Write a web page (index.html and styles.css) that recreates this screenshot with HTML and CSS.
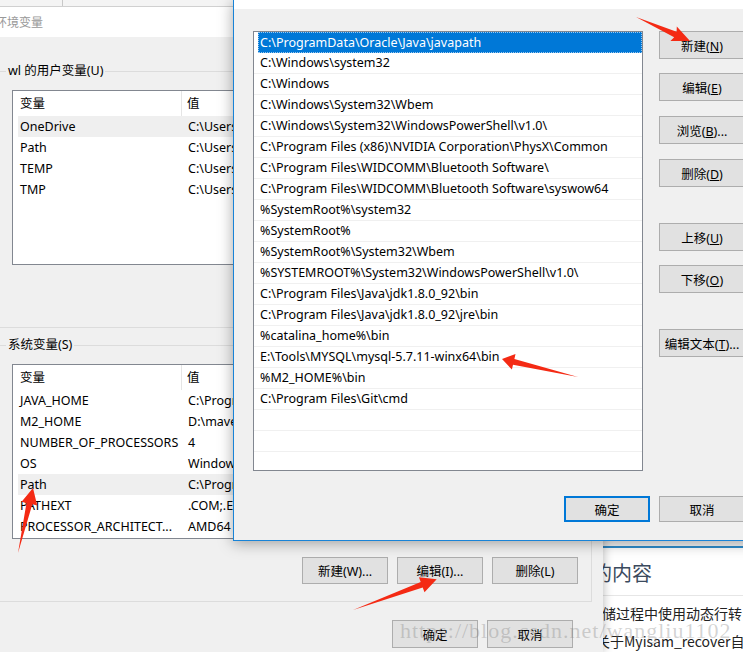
FILE: index.html
```html
<!DOCTYPE html>
<html lang="zh-CN">
<head>
<meta charset="utf-8">
<title>编辑环境变量</title>
<link rel="stylesheet" href="styles.css">
</head>
<body>
<div class="desktop">
  <div class="web">
    <div class="web-top"></div>
    <div class="web-h">的内容</div>
    <div class="web-p">存储过程中使用动态行转</div>
    <div class="web-p web-p2">关于Myisam_recover自</div>
  </div>

  <div class="envwin">
    <div class="topstrip"><div class="tab"></div></div>
    <div class="titlebar">环境变量</div>
    <div class="group g1">
      <div class="glabel">wl 的用户变量(U)</div>
      <div class="lv">
        <div class="lv-head"><span class="c1 hc1">变量</span><span class="c2 hc2">值</span></div>
        <div class="lv-row hl"><span class="c1">OneDrive</span><span class="c2">C:\Users\wl\OneDrive</span></div>
        <div class="lv-row"><span class="c1">Path</span><span class="c2">C:\Users\wl\AppData\Local\Microsoft\WindowsApps</span></div>
        <div class="lv-row"><span class="c1">TEMP</span><span class="c2">C:\Users\wl\AppData\Local\Temp</span></div>
        <div class="lv-row"><span class="c1">TMP</span><span class="c2">C:\Users\wl\AppData\Local\Temp</span></div>
      </div>
    </div>
    <div class="group g2">
      <div class="glabel">系统变量(S)</div>
      <div class="lv">
        <div class="lv-head"><span class="c1 hc1">变量</span><span class="c2 hc2">值</span></div>
        <div class="lv-row"><span class="c1">JAVA_HOME</span><span class="c2">C:\Program Files\Java\jdk1.8.0_92</span></div>
        <div class="lv-row"><span class="c1">M2_HOME</span><span class="c2">D:\maven\apache-maven-3.3.9</span></div>
        <div class="lv-row"><span class="c1">NUMBER_OF_PROCESSORS</span><span class="c2">4</span></div>
        <div class="lv-row"><span class="c1">OS</span><span class="c2">Windows_NT</span></div>
        <div class="lv-row hl"><span class="c1">Path</span><span class="c2">C:\ProgramData\Oracle\Java\javapath</span></div>
        <div class="lv-row"><span class="c1">PATHEXT</span><span class="c2">.COM;.EXE;.BAT;.CMD;.VBS</span></div>
        <div class="lv-row"><span class="c1">PROCESSOR_ARCHITECT...</span><span class="c2">AMD64</span></div>
      </div>
      <div class="gbtns">
        <button class="btn">新建(W)...</button>
        <button class="btn">编辑(I)...</button>
        <button class="btn">删除(L)</button>
      </div>
    </div>
    <div class="envfoot">
      <button class="btn fbtn">确定</button>
      <button class="btn fbtn">取消</button>
    </div>
  </div>

  <div class="dlg">
    <div class="dlg-title"></div>
    <div class="dlg-body">
      <div class="dlg-main">
        <div class="plist">
          <div class="pitem sel">C:\ProgramData\Oracle\Java\javapath</div>
          <div class="pitem">C:\Windows\system32</div>
          <div class="pitem">C:\Windows</div>
          <div class="pitem">C:\Windows\System32\Wbem</div>
          <div class="pitem">C:\Windows\System32\WindowsPowerShell\v1.0\</div>
          <div class="pitem">C:\Program Files (x86)\NVIDIA Corporation\PhysX\Common</div>
          <div class="pitem">C:\Program Files\WIDCOMM\Bluetooth Software\</div>
          <div class="pitem">C:\Program Files\WIDCOMM\Bluetooth Software\syswow64</div>
          <div class="pitem">%SystemRoot%\system32</div>
          <div class="pitem">%SystemRoot%</div>
          <div class="pitem">%SystemRoot%\System32\Wbem</div>
          <div class="pitem">%SYSTEMROOT%\System32\WindowsPowerShell\v1.0\</div>
          <div class="pitem">C:\Program Files\Java\jdk1.8.0_92\bin</div>
          <div class="pitem">C:\Program Files\Java\jdk1.8.0_92\jre\bin</div>
          <div class="pitem">%catalina_home%\bin</div>
          <div class="pitem">E:\Tools\MYSQL\mysql-5.7.11-winx64\bin</div>
          <div class="pitem">%M2_HOME%\bin</div>
          <div class="pitem">C:\Program Files\Git\cmd</div>
          <div class="pitem"></div>
          <div class="pitem"></div>
          <div class="pitem"></div>
          <div class="pitem"></div>
        </div>
        <div class="pbtns">
          <button class="btn pbtn">新建(<u>N</u>)</button>
          <button class="btn pbtn gap14">编辑(<u>E</u>)</button>
          <button class="btn pbtn">浏览(<u>B</u>)...</button>
          <button class="btn pbtn gap15">删除(<u>D</u>)</button>
          <button class="btn pbtn gap36">上移(<u>U</u>)</button>
          <button class="btn pbtn gap14">下移(<u>O</u>)</button>
          <button class="btn pbtn gap36">编辑文本(<u>T</u>)...</button>
        </div>
      </div>
      <div class="dlg-foot">
        <button class="btn dbtn ok">确定</button>
        <button class="btn dbtn">取消</button>
      </div>
    </div>
  </div>

  <div class="watermark">https://blog.csdn.net/wangliu1102</div>

  <svg class="arrows" width="743" height="652" viewBox="0 0 743 652">
    <polygon points="636,17 676.6,31.8 676.8,26.4 690,41 670.4,41 674.2,37.2"/>
    <polygon points="578,377 514.4,358.9 515.5,354 502,359 511.9,369.6 513,364.7"/>
    <polygon points="18,553 32.3,504.3 37.2,505.4 33,488 21.6,501.8 26.5,502.9"/>
    <polygon points="353,610 422.7,587.6 424.5,592.3 436.7,579.3 418.9,577.3 420.7,582"/>
  </svg>
</div>
</body>
</html>
```

FILE: styles.css
```css
* { box-sizing: border-box; }

html, body {
  margin: 0;
  padding: 0;
}

body {
  width: 743px;
  height: 652px;
  overflow: hidden;
  background: #f0f0f0;
  font-family: "Noto Sans", "Noto Sans CJK SC", sans-serif;
  font-size: 12.5px;
  color: #000;
}

.desktop {
  position: relative;
  width: 743px;
  height: 652px;
  overflow: hidden;
}

/* ---------- web page behind ---------- */
.web {
  position: absolute;
  left: 560px;
  top: 541px;
  width: 200px;
  height: 111px;
  background: #fff;
  z-index: 1;
  font-family: "Noto Sans CJK SC", sans-serif;
}
.web-top {
  height: 7px;
  background: #f4f4f4;
  border-bottom: 2px solid #2f8dcc;
}
.web-h {
  margin-top: 11px;
  padding: 0 0 8px 32px;
  font-size: 20px;
  line-height: 28px;
  color: #3b4a5e;
  border-bottom: 1px solid #e6e6e6;
  white-space: nowrap;
}
.web-p {
  margin-top: 3px;
  padding-left: 28px;
  font-size: 14px;
  line-height: 28px;
  color: #222;
  white-space: nowrap;
}
.web-p2 {
  margin-top: 0;
  padding-left: 36px;
}

/* ---------- environment variables window ---------- */
.envwin {
  position: absolute;
  left: 0;
  top: 0;
  width: 603px;
  height: 652px;
  background: #f0f0f0;
  box-shadow: 0 0 10px rgba(0, 0, 0, 0.3);
  z-index: 2;
}
.topstrip {
  height: 7px;
  background: #f4f4f4;
  border-bottom: 1px solid #d0d0d0;
}
.tab {
  width: 63px;
  height: 6px;
  border-right: 1px solid #c8c8c8;
}
.titlebar {
  height: 30px;
  background: #fff;
  color: #999;
  font-family: "Noto Sans CJK SC", sans-serif;
  font-size: 12px;
  line-height: 30px;
  text-indent: -5px;
  white-space: nowrap;
}

.group {
  border: 1px solid #dcdcdc;
  margin-left: -10px;
  margin-right: 11px;
}
.g1 { margin-top: 34px; }
.g2 { margin-top: 17px; }

.glabel {
  width: max-content;
  margin: -9px 0 0 15px;
  padding: 0 2px;
  background: #f0f0f0;
  line-height: 16px;
}

.lv {
  width: 400px;
  height: 175px;
  margin: 11px 0 0 21px;
  padding-left: 5px;
  background: #fff;
  border: 1px solid #828790;
  overflow: hidden;
}
.g1 .lv { margin-bottom: 62px; }

.lv-head {
  display: flex;
  height: 25px;
  line-height: 25px;
}
.lv-row {
  display: flex;
  height: 21px;
  line-height: 21px;
  white-space: nowrap;
}
.lv-row.hl { background: #efefef; }

.c1 {
  flex: none;
  width: 168px;
  padding-left: 2px;
  white-space: nowrap;
  overflow: hidden;
}
.c2 {
  flex: none;
  padding-left: 2px;
  white-space: nowrap;
}
.hc1 {
  width: 164px;
  border-right: 1px solid #e5e5e5;
}
.hc2 { padding-left: 5px; }

.gbtns {
  display: flex;
  justify-content: flex-end;
  gap: 9px;
  margin: 18px 0 17px;
  padding-right: 13px;
}

.btn {
  width: 86px;
  height: 27px;
  padding: 0;
  background: #e1e1e1;
  border: 1px solid #adadad;
  font-family: "Noto Sans", "Noto Sans CJK SC", sans-serif;
  font-size: 12.5px;
  color: #000;
  white-space: nowrap;
}
.btn u { text-underline-offset: 1px; }

.envfoot {
  display: flex;
  justify-content: flex-end;
  gap: 9px;
  margin-top: 18px;
  padding-right: 30px;
}
.fbtn { height: 28px; }

/* ---------- edit dialog ---------- */
.dlg {
  position: absolute;
  left: 233px;
  top: 0;
  width: 530px;
  background: #f0f0f0;
  border-left: 1px solid #1883d7;
  border-bottom: 1px solid #1883d7;
  box-shadow: 0 2px 14px rgba(0, 0, 0, 0.35);
  z-index: 3;
}
.dlg-title {
  height: 9px;
  background: #fff;
}
.dlg-body {
  width: 511px;
  padding: 22px 0 18px 19px;
}
.dlg-main {
  display: flex;
  gap: 16px;
}
.plist {
  flex: none;
  width: 390px;
  height: 440px;
  background: #fff;
  border: 1px solid #828790;
  overflow: hidden;
}
.pitem {
  height: 21px;
  line-height: 20px;
  padding-left: 6px;
  border-bottom: 1px solid #f0f0f0;
  white-space: nowrap;
}
.pitem.sel {
  margin-left: 4px;
  padding-left: 1px;
  background: #0078d7;
  color: #fff;
  border: 1px dotted #9cc8ee;
}

.pbtns {
  display: flex;
  flex-direction: column;
  gap: 15px;
}
.pbtn { height: 28px; }
.gap14 { margin-top: -1px; }
.gap15 { margin-top: 0; }
.gap36 { margin-top: 21px; }

.dlg-foot {
  display: flex;
  justify-content: flex-end;
  gap: 9px;
  margin-top: 25px;
}
.dbtn { height: 26px; }
.ok { border: 2px solid #0078d7; }

/* ---------- overlays ---------- */
.watermark {
  position: absolute;
  left: 400px;
  top: 617px;
  font-family: "Liberation Serif", serif;
  font-size: 22px;
  line-height: 28px;
  letter-spacing: 1px;
  color: rgba(130, 130, 130, 0.35);
  white-space: nowrap;
  z-index: 4;
}

.arrows {
  position: absolute;
  left: 0;
  top: 0;
  z-index: 5;
  pointer-events: none;
}
.arrows polygon { fill: #f42a14; }
```
